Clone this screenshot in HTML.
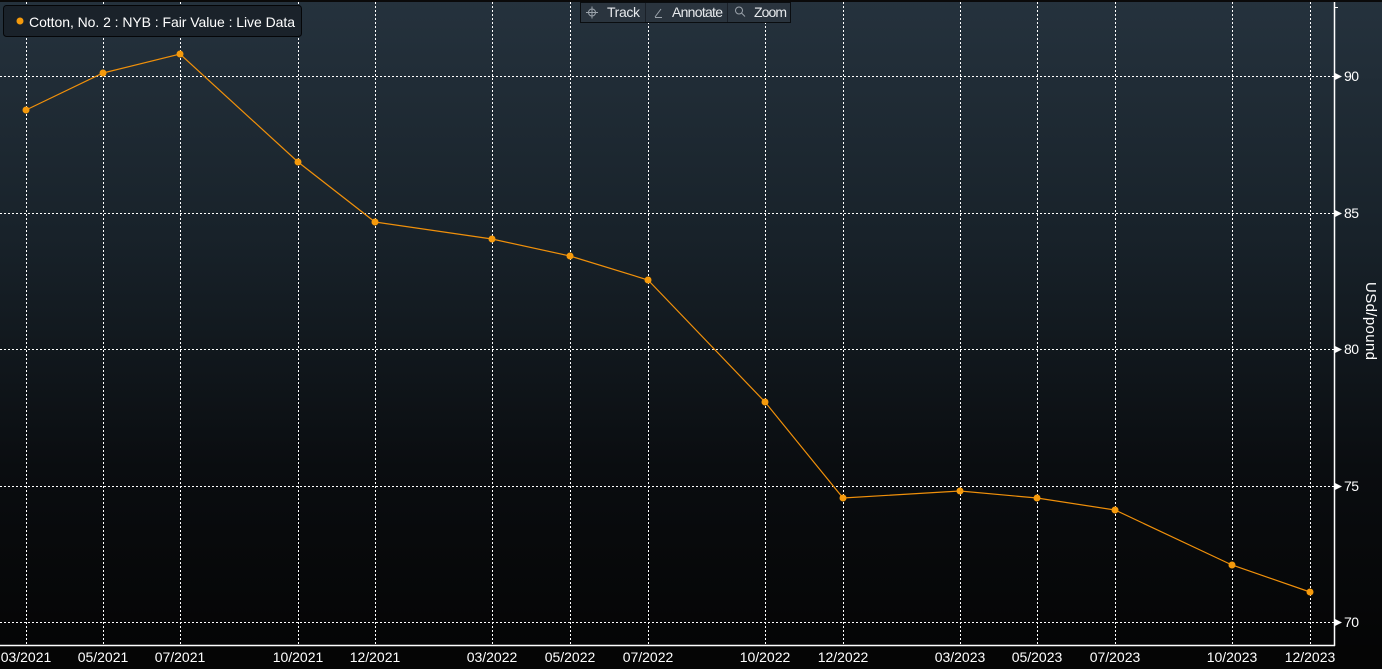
<!DOCTYPE html>
<html><head><meta charset="utf-8"><style>
html,body{margin:0;padding:0;width:1382px;height:669px;overflow:hidden;background:#050505}
svg{display:block}
text{font-family:"Liberation Sans",sans-serif}
</style></head><body>
<svg width="1382" height="669" viewBox="0 0 1382 669" xmlns="http://www.w3.org/2000/svg">
<defs>
<linearGradient id="bg" x1="0" y1="0" x2="0" y2="1">
<stop offset="0" stop-color="#25323d"/>
<stop offset="0.35" stop-color="#18222a"/>
<stop offset="0.7" stop-color="#0a0d10"/>
<stop offset="1" stop-color="#040404"/>
</linearGradient>
</defs>
<rect x="0" y="0" width="1382" height="669" fill="url(#bg)"/>
<rect x="0" y="0" width="1382" height="2" fill="#0a0a0a"/>
<rect x="0" y="645" width="1382" height="24" fill="#050505"/>
<g stroke="#ffffff" stroke-width="1" stroke-dasharray="2,2" fill="none">
<line x1="26.5" y1="2" x2="26.5" y2="645"/>
<line x1="103.5" y1="2" x2="103.5" y2="645"/>
<line x1="180.5" y1="2" x2="180.5" y2="645"/>
<line x1="298.5" y1="2" x2="298.5" y2="645"/>
<line x1="375.5" y1="2" x2="375.5" y2="645"/>
<line x1="492.5" y1="2" x2="492.5" y2="645"/>
<line x1="570.5" y1="2" x2="570.5" y2="645"/>
<line x1="648.5" y1="2" x2="648.5" y2="645"/>
<line x1="765.5" y1="2" x2="765.5" y2="645"/>
<line x1="843.5" y1="2" x2="843.5" y2="645"/>
<line x1="960.5" y1="2" x2="960.5" y2="645"/>
<line x1="1037.5" y1="2" x2="1037.5" y2="645"/>
<line x1="1115.5" y1="2" x2="1115.5" y2="645"/>
<line x1="1232.5" y1="2" x2="1232.5" y2="645"/>
<line x1="1310.5" y1="2" x2="1310.5" y2="645"/>
<line x1="0" y1="76.5" x2="1334" y2="76.5"/>
<line x1="0" y1="213.5" x2="1334" y2="213.5"/>
<line x1="0" y1="349.5" x2="1334" y2="349.5"/>
<line x1="0" y1="486.5" x2="1334" y2="486.5"/>
<line x1="0" y1="622.5" x2="1334" y2="622.5"/>
</g>
<line x1="0" y1="645.5" x2="1335" y2="645.5" stroke="#fff" stroke-width="1.5"/>
<line x1="1334.5" y1="2" x2="1334.5" y2="646" stroke="#fff" stroke-width="1.5"/>
<line x1="1334" y1="7.5" x2="1338" y2="7.5" stroke="#fff"/>
<g fill="#fff">
<polygon points="1335,73 1342,76.5 1335,80"/>
<polygon points="1335,210 1342,213.5 1335,217"/>
<polygon points="1335,346 1342,349.5 1335,353"/>
<polygon points="1335,483 1342,486.5 1335,490"/>
<polygon points="1335,619 1342,622.5 1335,626"/>
</g>
<g fill="#fff" font-size="14">
<text x="1344" y="81" textLength="15">90</text>
<text x="1344" y="218" textLength="15">85</text>
<text x="1344" y="354" textLength="15">80</text>
<text x="1344" y="491" textLength="15">75</text>
<text x="1344" y="627" textLength="15">70</text>
</g>
<text x="0" y="0" font-size="15" fill="#fff" transform="translate(1366,282) rotate(90)" textLength="78">USd/pound</text>
<g fill="#fff" font-size="14" text-anchor="middle">
<text x="26" y="662">03/2021</text>
<text x="103" y="662">05/2021</text>
<text x="180" y="662">07/2021</text>
<text x="298" y="662">10/2021</text>
<text x="375" y="662">12/2021</text>
<text x="492" y="662">03/2022</text>
<text x="570" y="662">05/2022</text>
<text x="648" y="662">07/2022</text>
<text x="765" y="662">10/2022</text>
<text x="843" y="662">12/2022</text>
<text x="960" y="662">03/2023</text>
<text x="1037" y="662">05/2023</text>
<text x="1115" y="662">07/2023</text>
<text x="1232" y="662">10/2023</text>
<text x="1310" y="662">12/2023</text>
</g>
<polyline fill="none" stroke="#f0900a" stroke-width="1.2" points="26,110 103,73 180,54 298,162 375,222 492,239 570,256 648,280 765,402 843,498 960,491 1037,498 1115,510 1232,565 1310,592"/>
<g fill="#f59a0c">
<circle cx="26" cy="110" r="3.5"/><circle cx="103" cy="73" r="3.5"/><circle cx="180" cy="54" r="3.5"/>
<circle cx="298" cy="162" r="3.5"/><circle cx="375" cy="222" r="3.5"/><circle cx="492" cy="239" r="3.5"/>
<circle cx="570" cy="256" r="3.5"/><circle cx="648" cy="280" r="3.5"/><circle cx="765" cy="402" r="3.5"/>
<circle cx="843" cy="498" r="3.5"/><circle cx="960" cy="491" r="3.5"/><circle cx="1037" cy="498" r="3.5"/>
<circle cx="1115" cy="510" r="3.5"/><circle cx="1232" cy="565" r="3.5"/><circle cx="1310" cy="592" r="3.5"/>
</g>
<rect x="3.5" y="5.5" width="298" height="31" rx="3" fill="#1a222a" stroke="#050608" stroke-width="1"/>
<circle cx="20" cy="21" r="3.5" fill="#f59a0c"/>
<text x="29" y="27" font-size="14" fill="#fff" textLength="266">Cotton, No. 2 : NYB : Fair Value : Live Data</text>
<rect x="580.5" y="2.5" width="210" height="20" fill="#2a343e" stroke="#0a0d10"/>
<line x1="645.5" y1="3" x2="645.5" y2="22" stroke="#1a2028"/>
<line x1="727.5" y1="3" x2="727.5" y2="22" stroke="#1a2028"/>
<g stroke="#9aa2aa" fill="none" stroke-width="1">
<circle cx="592" cy="12.5" r="3.5"/><line x1="586" y1="12.5" x2="598" y2="12.5"/><line x1="592" y1="6.5" x2="592" y2="18.5"/>
<line x1="655" y1="17" x2="661" y2="9"/><line x1="655" y1="17.5" x2="662" y2="17.5"/>
<circle cx="739" cy="10.5" r="3.5"/><line x1="741.5" y1="13" x2="745" y2="16.5"/>
</g>
<g fill="#e6e9ec" font-size="14">
<text x="607" y="17" textLength="33">Track</text>
<text x="672" y="17" textLength="51">Annotate</text>
<text x="754" y="17" textLength="33">Zoom</text>
</g>
</svg>
</body></html>
